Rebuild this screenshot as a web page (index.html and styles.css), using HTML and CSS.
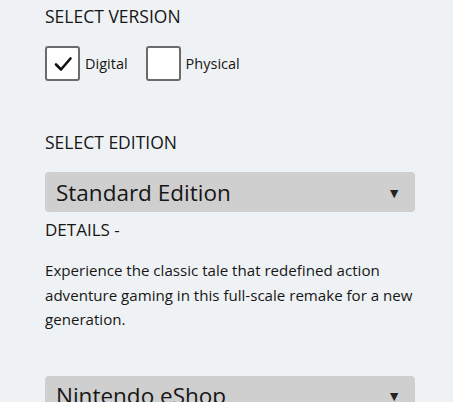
FILE: index.html
```html
<!DOCTYPE html>
<html lang="en">
<head>
<meta charset="utf-8">
<link rel="stylesheet" href="styles.css">
</head>
<body>
<main class="panel">
  <h2 class="label label-version">SELECT VERSION</h2>
  <div class="options">
    <label class="option">
      <span class="box checked">
        <svg viewBox="0 0 20 20" width="20" height="20"><path d="M3 10.5 L8 15.5 L17.5 4.5" fill="none" stroke="#111" stroke-width="2.6" stroke-linecap="round" stroke-linejoin="round"/></svg>
      </span>
      <span class="opt-text">Digital</span>
    </label>
    <label class="option">
      <span class="box"></span>
      <span class="opt-text">Physical</span>
    </label>
  </div>
  <h2 class="label label-edition">SELECT EDITION</h2>
  <div class="select">
    <span class="select-text">Standard Edition</span>
    <span class="arrow">▼</span>
  </div>
  <h3 class="details">DETAILS -</h3>
  <p class="desc">Experience the classic tale that redefined action adventure gaming in this full-scale remake for a new generation.</p>
  <div class="select select-shop">
    <span class="select-text">Nintendo eShop</span>
    <span class="arrow">▼</span>
  </div>
</main>
</body>
</html>
```
FILE: styles.css
```css
html, body {
  margin: 0;
  padding: 0;
  background: #eff2f4;
  overflow: hidden;
}
body {
  font-family: "Open Sans", "Noto Sans", sans-serif;
  color: #161616;
}
.panel {
  padding: 4px 38px 0 45px;
  display: flex;
  flex-direction: column;
}
.label {
  margin: 0;
  font-size: 17.5px;
  font-weight: 400;
  line-height: 24px;
}
.options {
  display: flex;
  gap: 18px;
  margin-top: 18px;
}
.option {
  display: flex;
  align-items: center;
  gap: 5px;
}
.box {
  width: 31px;
  height: 31px;
  border: 2px solid #6b6b6b;
  border-radius: 3px;
  background: #fff;
  display: flex;
  align-items: center;
  justify-content: center;
}
.opt-text {
  font-size: 14.5px;
}
.label-edition {
  margin-top: 49px;
}
.select {
  margin-top: 18px;
  height: 40px;
  background: #cfcfcf;
  border-radius: 4px;
  display: flex;
  align-items: center;
  justify-content: space-between;
  padding: 0 14px 0 11px;
}
.select-text {
  font-size: 22.5px;
}
.arrow {
  font-size: 14px;
  color: #222;
}
.details {
  margin: 7px 0 0;
  font-size: 17px;
  font-weight: 400;
  line-height: 22px;
}
.desc {
  margin: 17px 0 0;
  font-size: 15.1px;
  line-height: 24.5px;
}
.select-shop {
  margin-top: 44px;
}
```
